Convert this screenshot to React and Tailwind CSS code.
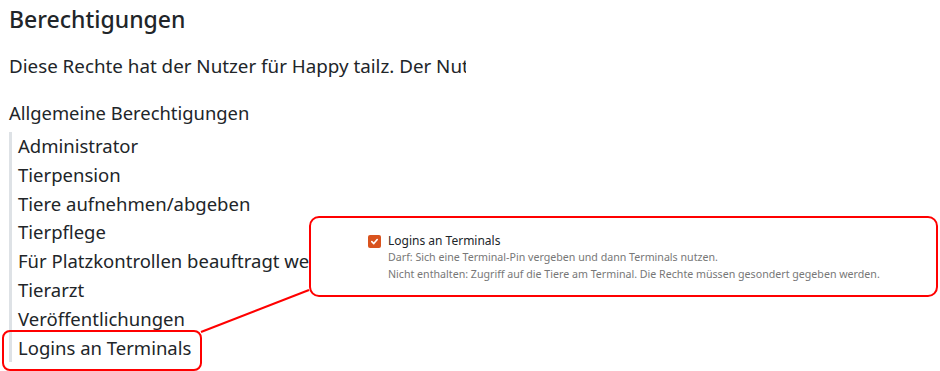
import React from "react";

// Rechte-Liste aus der Nutzerverwaltung
const rights = [
  "Administrator",
  "Tierpension",
  "Tiere aufnehmen/abgeben",
  "Tierpflege",
  "Für Platzkontrollen beauftragt werden",
  "Tierarzt",
  "Veröffentlichungen",
  "Logins an Terminals",
];

export default function App() {
  return (
    <div
      className="relative w-[940px] h-[371px] overflow-hidden bg-white text-[#212529]"
      style={{ fontFamily: '"Noto Sans", "Open Sans", sans-serif' }}
    >
      {/* Ausschnitt der Seite */}
      <div className="w-[466px] overflow-hidden pl-[9px] whitespace-nowrap">
        <h2 className="mt-[3px] text-[23px] leading-[32px] font-medium">Berechtigungen</h2>
        <p className="mt-[18px] text-[18.8px] leading-[26px]">
          Diese Rechte hat der Nutzer für Happy tailz. Der Nutzer
        </p>
        <div className="mt-[21px] text-[18.4px] leading-[26px]">Allgemeine Berechtigungen</div>
        <ul className="mt-[6px] border-l-[3px] border-[#dee2e6] pl-[6px]">
          {rights.map((r) => (
            <li key={r} className="text-[18.5px] leading-[28.8px]">
              {r}
            </li>
          ))}
        </ul>
      </div>

      {/* Markierung + Verbindungslinie */}
      <svg className="absolute left-0 top-0" width="940" height="371">
        <line x1="309" y1="290" x2="201" y2="332" stroke="#ff0000" strokeWidth="2" />
      </svg>
      <div className="absolute left-[2px] top-[330px] w-[200px] h-[41px] rounded-[8px] border-2 border-[#ff0000]" />

      {/* Callout mit Detail */}
      <div className="absolute left-[309px] top-[216px] w-[629px] h-[81px] rounded-[10px] border-2 border-[#ff0000] bg-white pl-[57px] pt-[15px]">
        <div className="flex items-center gap-[7px]">
          <span className="flex h-[13px] w-[13px] items-center justify-center rounded-[2px] bg-[#d9531e]">
            <svg width="9" height="9" viewBox="0 0 10 10">
              <path d="M2 5.2 L4.2 7.3 L8 2.8" fill="none" stroke="white" strokeWidth="1.8" strokeLinecap="round" strokeLinejoin="round" />
            </svg>
          </span>
          <span className="text-[12px] leading-[16px] text-[#212529]">Logins an Terminals</span>
        </div>
        <div className="pl-[20px] text-[10.65px] leading-[17px] text-[#777]">
          <div>Darf: Sich eine Terminal-Pin vergeben und dann Terminals nutzen.</div>
          <div>Nicht enthalten: Zugriff auf die Tiere am Terminal. Die Rechte müssen gesondert gegeben werden.</div>
        </div>
      </div>
    </div>
  );
}
